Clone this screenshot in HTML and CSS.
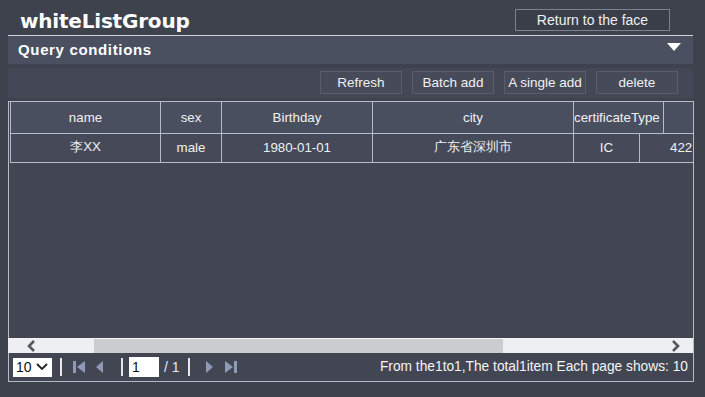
FILE: index.html
```html
<!DOCTYPE html>
<html>
<head>
<meta charset="utf-8">
<link rel="stylesheet" href="styles.css">
</head>
<body>
<div class="titlebar">
  <h1 class="title">whiteListGroup</h1>
  <button class="btn-return">Return to the face</button>
</div>
<div class="query">
  <span>Query conditions</span>
  <svg class="caret" width="14" height="9" viewBox="0 0 14 9"><polygon points="0,0 14,0 7,8" fill="#ffffff"/></svg>
</div>
<div class="toolbar">
  <button class="tbtn">Refresh</button>
  <button class="tbtn">Batch add</button>
  <button class="tbtn">A single add</button>
  <button class="tbtn">delete</button>
</div>
<div class="grid">
  <div class="view">
    <div class="row head">
      <div class="cell c-name">name</div>
      <div class="cell c-sex">sex</div>
      <div class="cell c-birth">Birthday</div>
      <div class="cell c-city">city</div>
      <div class="cell c-cert">certificateType</div>
      <div class="cell c-more"></div>
    </div>
    <div class="row body">
      <div class="cell c-name">李XX</div>
      <div class="cell c-sex">male</div>
      <div class="cell c-birth">1980-01-01</div>
      <div class="cell c-city">广东省深圳市</div>
      <div class="cell c-type">IC</div>
      <div class="cell c-id">422</div>
    </div>
  </div>
  <div class="hscroll">
    <svg class="sarrow" width="10" height="12" viewBox="0 0 10 12"><polyline points="8,1 3,6 8,11" fill="none" stroke="#55575c" stroke-width="2.6"/></svg>
    <div class="track"><div class="thumb"></div></div>
    <svg class="sarrow" width="10" height="12" viewBox="0 0 10 12"><polyline points="2,1 7,6 2,11" fill="none" stroke="#55575c" stroke-width="2.6"/></svg>
  </div>
  <div class="pager">
    <div class="pager-left">
      <div class="select"><span>10</span><svg width="12" height="8" viewBox="0 0 12 8"><polyline points="1,1 6,6 11,1" fill="none" stroke="#222" stroke-width="1.8"/></svg></div>
      <span class="sep"></span>
      <svg class="pico first" width="12" height="14" viewBox="0 0 12 14"><rect x="0" y="1" width="3" height="12" fill="#8f9ab8"/><polygon points="12,1 4,7 12,13" fill="#8f9ab8"/></svg>
      <svg class="pico prev" width="7" height="12" viewBox="0 0 7 12"><polygon points="7,0 0,6 7,12" fill="#8f9ab8"/></svg>
      <span class="sep sep2"></span>
      <div class="pinput">1</div>
      <span class="ptotal">/ 1</span>
      <span class="sep"></span>
      <svg class="pico next" width="7" height="12" viewBox="0 0 7 12"><polygon points="0,0 7,6 0,12" fill="#8f9ab8"/></svg>
      <svg class="pico last" width="12" height="14" viewBox="0 0 12 14"><polygon points="0,1 8,7 0,13" fill="#8f9ab8"/><rect x="9" y="1" width="3" height="12" fill="#8f9ab8"/></svg>
    </div>
    <div class="pinfo">From the1to1,The total1item Each page shows: 10</div>
  </div>
</div>
</body>
</html>
```
FILE: styles.css
```css
* { box-sizing: border-box; }
body {
  margin: 0;
  width: 705px;
  height: 397px;
  overflow: hidden;
  background: #3e424d;
  font-family: "Liberation Sans", Arial, sans-serif;
  font-size: 13px;
  color: #f0f1f4;
}
button {
  font-family: "Liberation Sans", Arial, sans-serif;
  font-size: 13.5px;
  color: #f0f1f4;
  padding: 0;
  cursor: pointer;
}
.titlebar {
  display: flex;
  justify-content: space-between;
  align-items: flex-start;
  height: 35px;
  padding: 0 35px 0 20px;
}
.title {
  margin: 0;
  padding-top: 9px;
  font-family: "DejaVu Sans", Verdana, sans-serif;
  font-weight: bold;
  font-size: 20px;
  line-height: 24px;
  color: #ffffff;
  letter-spacing: -0.2px;
}
.btn-return {
  margin-top: 9px;
  width: 155px;
  height: 22px;
  background: #3a3e49;
  border: 1px solid #7d818c;
  font-size: 14px;
}
.query {
  margin: 0 12px 0 8px;
  height: 29px;
  border-top: 1px solid #d2d5dc;
  background: #4b5061;
  display: flex;
  align-items: center;
  justify-content: space-between;
  padding: 0 12px 2px 10px;
  font-weight: bold;
  font-size: 15px;
  letter-spacing: 0.65px;
  color: #ffffff;
}
.caret { margin-top: -4px; }
.toolbar {
  margin: 4px 12px 0 8px;
  height: 30px;
  background: #444856;
  display: flex;
  justify-content: flex-end;
  align-items: center;
  gap: 10px;
  padding: 0 15px 1px 0;
}
.tbtn {
  width: 82px;
  height: 23px;
  background: #474b59;
  border: 1px solid #595d6a;
}
.grid {
  margin: 3px 0 0 8px;
  width: 686px;
  height: 281px;
  border: 1px solid #b7bbc8;
  display: flex;
  flex-direction: column;
  background: #424652;
}
.view {
  flex: 1;
  overflow: hidden;
  padding-left: 1px;
}
.row {
  display: flex;
  width: 1100px;
  border-left: 1px solid #b7bbc8;
  border-bottom: 1px solid #b7bbc8;
  font-size: 13.3px;
}
.row.head { height: 32px; background: #4a4f5f; }
.row.body { height: 29px; background: #464a58; }
.cell {
  flex: none;
  border-right: 1px solid #b7bbc8;
  display: flex;
  align-items: center;
  justify-content: center;
  white-space: nowrap;
  overflow: hidden;
  color: #f0f1f4;
}
.row.head .cell { padding-bottom: 1px; }
.c-name { width: 150px; }
.c-sex { width: 61px; }
.c-birth { width: 151px; }
.c-city { width: 201px; }
.c-cert { width: 90px; justify-content: flex-start; padding-left: 0; }
.c-more { width: 120px; }
.c-type { width: 66px; }
.c-id { width: 200px; justify-content: flex-start; padding-left: 30px; }
.row.body .cell { padding-bottom: 2px; }
.hscroll {
  height: 15px;
  display: flex;
  align-items: center;
  background: #eeeff2;
  border-top: 1px solid #f4f4f6;
  margin-left: -1px;
}
.sarrow { flex: none; margin: 0 8px 0 18px; }
.hscroll .sarrow:last-child { margin: 0 12px 0 8px; }
.track {
  flex: 1;
  height: 100%;
  padding-left: 50px;
  padding-right: 160px;
}
.thumb { height: 100%; background: #cbccce; }
.pager {
  height: 28px;
  display: flex;
  align-items: center;
  justify-content: space-between;
  padding: 0 5px 0 4px;
}
.pager-left {
  display: flex;
  align-items: center;
}
.select {
  width: 39px;
  height: 19px;
  background: #ffffff;
  color: #111;
  display: flex;
  align-items: center;
  justify-content: space-between;
  padding: 0 4px 0 3px;
  font-size: 14px;
}
.sep {
  width: 2px;
  height: 18px;
  background: #e6e8ee;
  margin: 0 8px 0 8px;
}
.sep2 { margin: 0 6px 0 8px; }
.pico { flex: none; }
.first { margin: 0 11px 0 3px; }
.prev { margin-right: 10px; }
.pinput {
  width: 30px;
  height: 20px;
  background: #ffffff;
  color: #111;
  padding: 2px 0 0 3px;
  font-size: 14px;
}
.ptotal { margin-left: 5px; font-size: 14px; color: #e8eaef; }
.next { margin-left: 8px; margin-right: 12px; }
.pinfo { font-size: 13.75px; color: #f4f5f8; padding-bottom: 1px; }
```
